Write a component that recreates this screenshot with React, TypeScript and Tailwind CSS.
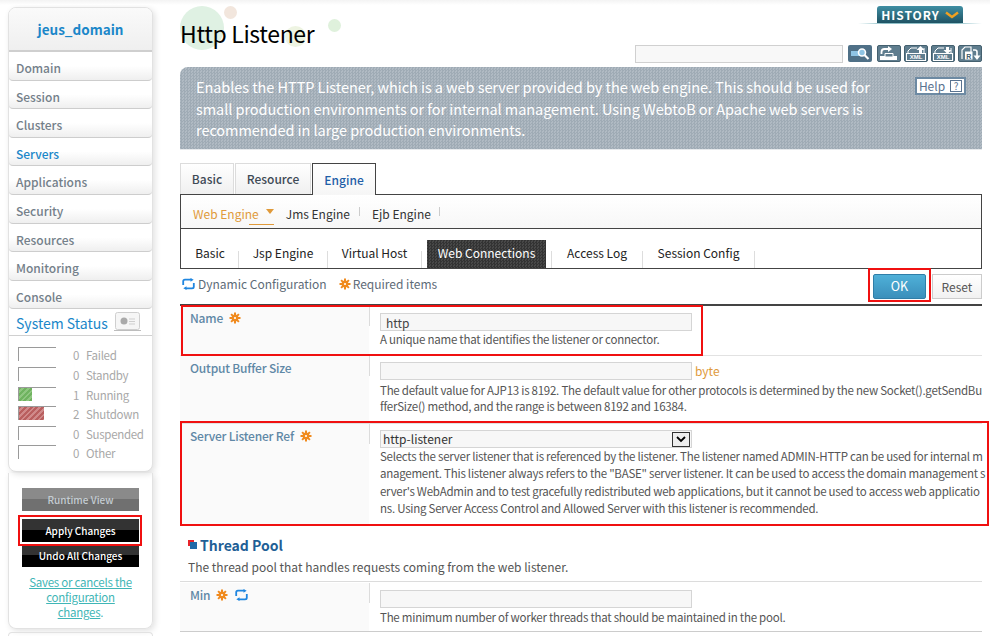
import React from 'react';

const FONT = "font-['Noto_Sans_CJK_KR','Noto_Sans',sans-serif]";

const menu = ['Domain', 'Session', 'Clusters', 'Servers', 'Applications', 'Security', 'Resources', 'Monitoring', 'Console'];

const statuses = [
  { count: 0, label: 'Failed', fill: '' },
  { count: 0, label: 'Standby', fill: '' },
  { count: 1, label: 'Running', fill: 'w-[13px] bg-[repeating-linear-gradient(135deg,#6fb35f_0_2px,#8fc680_2px_4px)]' },
  { count: 2, label: 'Shutdown', fill: 'w-[25px] bg-[repeating-linear-gradient(135deg,#b95f5f_0_2px,#d08a8a_2px_4px)]' },
  { count: 0, label: 'Suspended', fill: '' },
  { count: 0, label: 'Other', fill: '' },
];

function Gear() {
  return (
    <svg width="12" height="12" viewBox="0 0 12 12" className="inline-block shrink-0">
      <g stroke="#f08a1d" strokeWidth="2">
        <path d="M6 0.5v11M0.5 6h11M2.1 2.1l7.8 7.8M9.9 2.1l-7.8 7.8" />
      </g>
      <circle cx="6" cy="6" r="3.4" fill="#f08a1d" />
      <circle cx="6" cy="6" r="1.1" fill="#fff" />
    </svg>
  );
}

function Sync() {
  return (
    <svg width="13" height="12" viewBox="0 0 13 12" className="inline-block shrink-0" fill="none">
      <path d="M1.2 7V3.2C1.2 2.2 2 1.6 3 1.6h6.5" stroke="#1f86e0" strokeWidth="1.8" />
      <path d="M11.8 5v3.8c0 1-.8 1.6-1.8 1.6H3.500" stroke="#1f86e0" strokeWidth="1.8" />
      <path d="M8.500 0l3.200 1.800L8.500 3.800z M4.500 8.200L1.300 10.200l3.200 1.800z" fill="#1f86e0" />
    </svg>
  );
}

function ToolIcon({ children, plain }: { children: React.ReactNode; plain?: boolean }) {
  return (
    <div className={`w-[24px] h-[17px] rounded-[2px] flex items-center justify-center ${plain ? 'bg-[#4f7087]' : 'border border-[#44606f] bg-[#5f7d8e]'}`}>
      <svg width="22" height="15" viewBox="0 0 22 15" fill="none">
        {children}
      </svg>
    </div>
  );
}

function XmlIcon({ down }: { down?: boolean }) {
  return (
    <ToolIcon>
      <path d="M3 7V5l3-3h6M19 7V2" stroke="#fff" strokeWidth="1" />
      <path d={down ? 'M14 1h3v3h2.500l-4 4-4-4H14z' : 'M15.500 0l4 4H17v3h-3V4h-2.500z'} fill="#fff" />
      <rect x="1.500" y="7.500" width="19" height="7" fill="#5f7d8e" stroke="#fff" />
      <text x="11" y="13.200" textAnchor="middle" fontSize="6" fontWeight="700" fill="#fff" fontFamily="Liberation Sans, sans-serif">XML</text>
    </ToolIcon>
  );
}

function SideButton({ label, muted }: { label: string; muted?: boolean }) {
  return (
    <div
      className={`w-[117px] h-[23px] flex items-center justify-center text-[10px] font-medium ${
        muted
          ? 'bg-[linear-gradient(#8a8a8a_0_50%,#707070_50%_100%)] text-[#c4ccd2]'
          : 'bg-[linear-gradient(#333_0_48%,#000_48%_100%)] text-white'
      }`}
    >
      {label}
    </div>
  );
}

function Sidebar() {
  return (
    <div className="w-[180px] shrink-0 pl-[8px] pt-[7px]">
      <div className="w-[145px] rounded-[8px] border border-[#e2e2e2] bg-white shadow-[2px_2px_6px_rgba(0,0,0,0.12)] overflow-hidden">
        <div className="h-[44px] flex items-center justify-center bg-[linear-gradient(#fafafa,#efefef)] border-b-2 border-[#cfcfcf] text-[13.5px] font-bold text-[#1b87c9]">
          jeus_domain
        </div>
        {menu.map((item) => (
          <div
            key={item}
            className={`h-[28.6px] pl-[7px] pt-[7px] text-[12px] leading-[18px] font-medium rounded-b-[4px] border-b border-[#cdcdcd] bg-[linear-gradient(#fff_50%,#efefef)] ${
              item === 'Servers' ? 'text-[#1b87c9]' : 'text-[#74808a]'
            }`}
          >
            {item}
          </div>
        ))}
        <div className="h-[27px] flex items-center pl-[7px] gap-[6px] border-b border-[#d0d0d0]">
          <span className="pt-[3px] text-[14px] text-[#1b87c9]">System Status</span>
          <svg width="27" height="20" viewBox="0 0 27 20" fill="none">
            <rect x="1.500" y="0.500" width="24" height="17" rx="2" fill="#f6f6f6" stroke="#cfcfcf" />
            <circle cx="10" cy="9" r="3.500" fill="#aaa" />
            <path d="M15 7h6M15 9.500h6M15 12h6" stroke="#cfcfcf" />
            <path d="M0 18.500h27" stroke="#bdbdbd" />
          </svg>
        </div>
        <div className="pl-[9px] pt-[11px] pb-[6px]">
          {statuses.map((s) => (
            <div key={s.label} className="h-[19.6px] flex items-start">
              <div className="w-[38px] h-[14px] border-l border-t border-[#9a9a9a] shrink-0">
                {s.fill && <div className={`h-full ${s.fill}`} />}
              </div>
              <span className="w-[13px] ml-[17px] text-[11.5px] text-[#a8a8a8]">{s.count}</span>
              <span className="text-[11.5px] tracking-[-0.3px] text-[#a8a8a8]">{s.label}</span>
            </div>
          ))}
        </div>
      </div>
      <div className="w-[145px] h-[156px] mt-[1px] rounded-b-[8px] border-x border-b border-[#e2e2e2] shadow-[2px_2px_6px_rgba(0,0,0,0.12)] flex flex-col items-center pt-[15px]">
        <SideButton label="Runtime View" muted />
        <div className="mt-[8px]">
          <SideButton label="Apply Changes" />
        </div>
        <div className="mt-[2px]">
          <SideButton label="Undo All Changes" />
        </div>
        <p className="mt-[8px] text-[11.5px] leading-[15px] tracking-[-0.25px] text-center text-[#3fb6b6] w-[125px]">
          <span className="underline">Saves or cancels the</span>
          <br />
          <span className="underline">configuration</span>
          <br />
          <span className="underline">changes</span>.
        </p>
      </div>
      <div className="w-[145px] h-[10px] mt-[3px] rounded-t-[4px] border-x border-t border-[#e2e2e2]" />
    </div>
  );
}

function Row({
  label,
  icons,
  height,
  children,
  first,
  lines = 'leading-[16px]',
}: {
  label: string;
  icons?: React.ReactNode;
  height: string;
  children: React.ReactNode;
  first?: boolean;
  lines?: string;
}) {
  return (
    <div className={`flex ${height} ${first ? '' : 'border-t border-[#e2e2e2]'}`}>
      <div className="w-[189px] shrink-0 bg-[#fafafa] pl-[10px] pt-[3px] flex items-start gap-[6px] text-[12px] tracking-[-0.2px] font-medium text-[#5f88a6]">
        <span>{label}</span>
        <span className="flex items-center gap-[7px] mt-[3px]">{icons}</span>
      </div>
      <div className="w-px h-[20px] bg-[#dcdcdc] shrink-0" />
      <div className={`flex-1 min-w-0 pl-[10px] pt-[7px] text-[11.5px] tracking-[-0.25px] text-[#555] whitespace-nowrap ${lines}`}>
        {children}
      </div>
    </div>
  );
}

function TextBox({ value }: { value?: string }) {
  return (
    <div className="w-[312px] h-[18px] border border-[#d5d5d5] bg-[#f7f7f7] pl-[5px] text-[12px] leading-[17px] tracking-normal text-[#444]">
      {value}
    </div>
  );
}

export default function App() {
  return (
    <div className={`relative w-[990px] h-[636px] overflow-hidden bg-white flex ${FONT}`}>
      <div className="absolute inset-x-0 top-0 h-[5px] bg-[linear-gradient(#f3f3f3,#fff)]" />
      <Sidebar />

      <div className="relative w-[802px] shrink-0">
        {/* Title */}
        <div className="h-[67px] relative">
          <div className="absolute left-[0px] top-[6px] w-[44px] h-[44px] rounded-full bg-[#dff1e3]" />
          <div className="absolute left-[44px] top-[6px] w-[13px] h-[13px] rounded-full bg-[#f2e6dd]" />
          <div className="absolute left-[105px] top-[26px] w-[21px] h-[21px] rounded-full bg-[#eef4e2]" />
          <div className="absolute left-[148px] top-[19px] w-[13px] h-[13px] rounded-full bg-[#dff1dc]" />
          <h1 className="relative pt-[15px] text-[23px] leading-[36px] tracking-[-0.35px] font-normal text-black">Http Listener</h1>

          <div className="absolute right-[19px] top-[6px] w-[86px] h-[18px] rounded-t-[3px] bg-[linear-gradient(#3f8ea3,#1d4f60)] flex items-center justify-center gap-[5px] text-[12px] font-bold tracking-[1px] text-white">
            HISTORY
            <svg width="14" height="8" viewBox="0 0 14 8" fill="none">
              <path d="M1 1.500l6 4.500 6-4.500" stroke="#f0a020" strokeWidth="2.400" />
            </svg>
          </div>
          <div className="absolute right-0 top-[23px] w-[124px] h-px bg-[linear-gradient(90deg,#fff,#8fc0c8_20%,#8fc0c8_80%,#fff)]" />

          <div className="absolute left-[455px] top-[45px] w-[208px] h-[18px] border border-[#d0d0d0] bg-[#f8f8f8]" />
          <div className="absolute right-0 top-[45px] flex gap-[3px]">
            <div className="mr-[2px]">
              <ToolIcon plain>
                <rect x="2" y="5" width="9" height="5" fill="#8fc4e4" />
                <circle cx="13" cy="6.500" r="3.500" fill="#8fc4e4" stroke="#fff" strokeWidth="1.600" />
                <path d="M15.500 9l4 4" stroke="#fff" strokeWidth="2.200" />
              </ToolIcon>
            </div>
            <ToolIcon>
              <path d="M3.500 8V6a3 3 0 0 1 3-3h4" stroke="#fff" strokeWidth="1.800" />
              <path d="M10 0l4 3-4 3z" fill="#fff" />
              <path d="M2 10h17v4H2z" fill="#fff" />
              <path d="M7 7.500h8v3.500H7z" fill="#5f7d8e" stroke="#fff" />
            </ToolIcon>
            <XmlIcon />
            <XmlIcon down />
            <ToolIcon>
              <path d="M3 13V4l3-3h6v5" stroke="#fff" strokeWidth="1.200" />
              <rect x="6" y="5.500" width="7.500" height="8" fill="#fff" />
              <text x="9.700" y="12.500" textAnchor="middle" fontSize="7" fontWeight="700" fill="#44606f" fontFamily="Liberation Sans, sans-serif">R</text>
              <path d="M14 4h2a2 2 0 0 1 2 2v4" stroke="#fff" strokeWidth="1.600" />
              <path d="M14.500 9.500h7L18 14z" fill="#fff" />
            </ToolIcon>
          </div>
        </div>

        {/* Description banner */}
        <div className="relative h-[83px] rounded-tl-[8px] border-b border-[#e6e9ec] bg-[repeating-conic-gradient(#9fabb5_0_25%,#b0bac3_0_50%)] bg-[length:3px_3px] pl-[16px] pt-[9px] text-[14.5px] tracking-[-0.06px] leading-[21.5px] text-white whitespace-nowrap">
          <div>Enables the HTTP Listener, which is a web server provided by the web engine. This should be used for</div>
          <div>small production environments or for internal management. Using WebtoB or Apache web servers is</div>
          <div>recommended in large production environments.</div>
          <div className="absolute right-[16px] top-[10px] w-[51px] h-[18px] border-2 border-[#6d8aa3] bg-white flex items-center justify-center gap-[5px] text-[12px] tracking-normal text-[#5a7390]">
            Help
            <span className="w-[12px] h-[12px] border border-[#5a7390] text-[10px] leading-[10px] text-center">?</span>
          </div>
        </div>

        {/* Top tabs */}
        <div className="flex items-end gap-[1px] h-[44px] text-[12px] font-medium">
          <div className="w-[54px] h-[31px] flex items-center justify-center border-x border-t border-[#dcdcdc] bg-[linear-gradient(#fff,#f0f0f0)] text-[#3f4a55]">Basic</div>
          <div className="w-[76px] h-[31px] flex items-center justify-center border-x border-t border-[#dcdcdc] bg-[linear-gradient(#fff,#f0f0f0)] text-[#3f4a55]">Resource</div>
          <div className="w-[64px] h-[32px] -mb-px z-10 flex items-center justify-center border-x border-t border-[#444] bg-[linear-gradient(#fff,#f6f6f6)] text-[#1f5fa8]">Engine</div>
        </div>

        {/* Engine menu */}
        <div className="h-[35px] border border-[#444] bg-[linear-gradient(#fff,#f7f7f7)] flex items-center pl-[12px] text-[12px] text-[#333]">
          <div className="relative text-[#e09a3a] flex items-center gap-[7px] pt-[4px]">
            Web Engine
            <span className="w-0 h-0 border-x-[4px] border-x-transparent border-t-[5px] border-t-[#e09a3a] -mt-[4px]" />
            <span className="absolute right-0 -bottom-[2px] w-[25px] h-px bg-[#e09a3a]" />
          </div>
          <span className="ml-[12px] pt-[4px]">Jms Engine</span>
          <span className="ml-[9px] w-px h-[9px] bg-[#ccc]" />
          <span className="ml-[12px] pt-[4px]">Ejb Engine</span>
          <span className="ml-[8px] w-px h-[9px] bg-[#ccc]" />
        </div>

        {/* Sub tabs */}
        <div className="h-[40px] border-x border-b border-[#444] flex items-end pl-[5px] text-[12px] text-[#222]">
          <div className="w-[52px] h-[28px] pr-[4px] pb-[2px] flex items-center justify-center">Basic</div>
          <div className="w-px h-[17px] bg-[#ddd]" />
          <div className="w-[88px] h-[28px] pb-[2px] flex items-center justify-center">Jsp Engine</div>
          <div className="w-px h-[17px] bg-[#ddd]" />
          <div className="w-[93px] h-[28px] pb-[2px] flex items-center justify-center">Virtual Host</div>
          <div className="w-px h-[17px] bg-[#ddd]" />
          <div className="ml-[5px] w-[119px] h-[28px] pb-[2px] flex items-center justify-center bg-[repeating-conic-gradient(#333_0_25%,#484848_0_50%)] bg-[length:3px_3px] text-white">Web Connections</div>
          <div className="ml-[5px] w-px h-[17px] bg-[#ddd]" />
          <div className="w-[90px] h-[28px] pb-[2px] flex items-center justify-center">Access Log</div>
          <div className="w-px h-[17px] bg-[#ddd]" />
          <div className="w-[111px] h-[28px] pb-[2px] flex items-center justify-center">Session Config</div>
          <div className="w-px h-[17px] bg-[#ddd]" />
        </div>

        {/* Toolbar */}
        <div className="h-[37px] flex items-start justify-between border-b-2 border-[#444]">
          <div className="flex items-center pt-[6px] pl-[2px] text-[12px] text-[#5d6b77]">
            <Sync />
            <span className="ml-[3px]">Dynamic Configuration</span>
            <span className="ml-[12px] mr-[2px] flex"><Gear /></span>
            <span>Required items</span>
          </div>
          <div className="flex gap-[6px] pt-[5px]">
            <div className="w-[53px] h-[25px] flex items-center justify-center rounded-[2px] border border-[#2f7ea8] bg-[linear-gradient(#4fb0d8,#3a8fbb)] text-white text-[12.5px]">OK</div>
            <div className="w-[50px] h-[25px] flex items-center justify-center border border-[#ccc] bg-[linear-gradient(#fff,#f1f1f1)] text-[#555] text-[12px]">Reset</div>
          </div>
        </div>

        {/* Form */}
        <Row first label="Name" icons={<Gear />} height="h-[49px]">
          <TextBox value="http" />
          <div>A unique name that identifies the listener or connector.</div>
        </Row>
        <Row label="Output Buffer Size" height="h-[68px]">
          <div className="flex items-center -mt-[1px]">
            <TextBox />
            <span className="ml-[3px] text-[12px] tracking-normal text-[#e09a3a]">byte</span>
          </div>
          <div className="mt-[2px]">The default value for AJP13 is 8192. The default value for other protocols is determined by the new Socket().getSendBu</div>
          <div>fferSize() method, and the range is between 8192 and 16384.</div>
        </Row>
        <Row label="Server Listener Ref" icons={<Gear />} height="h-[101px]" lines="leading-[17.3px]">
          <div className="w-[312px] h-[18px] -mt-[1px] border border-[#d5d5d5] bg-[#f7f7f7] pl-[2px] pr-px flex items-center justify-between text-[12px] tracking-normal text-[#333]">
            http-listener
            <div className="w-[18px] h-[15px] border border-[#333] bg-[#eee] flex items-center justify-center">
              <svg width="10" height="7" viewBox="0 0 10 7" fill="none">
                <path d="M1 1l4 4 4-4" stroke="#000" strokeWidth="1.800" />
              </svg>
            </div>
          </div>
          <div>Selects the server listener that is referenced by the listener. The listener named ADMIN-HTTP can be used for internal m</div>
          <div>anagement. This listener always refers to the "BASE" server listener. It can be used to access the domain management s</div>
          <div>erver's WebAdmin and to test gracefully redistributed web applications, but it cannot be used to access web applicatio</div>
          <div>ns. Using Server Access Control and Allowed Server with this listener is recommended.</div>
        </Row>

        {/* Thread Pool */}
        <div className="flex items-center gap-[3px] pl-[8px] pt-[11px] text-[14px] font-bold text-[#1f5f96]">
          <span className="relative w-[9px] h-[9px] mt-[-3px]">
            <span className="absolute left-0 top-0 w-[6px] h-[6px] bg-[#e8232a]" />
            <span className="absolute left-[2px] top-[2px] w-[7px] h-[7px] bg-[#1f6aa8]" />
          </span>
          Thread Pool
        </div>
        <div className="pl-[8px] mt-[2px] h-[24px] text-[12px] text-[#555] border-b border-[#dcdcdc]">
          The thread pool that handles requests coming from the web listener.
        </div>
        <Row first label="Min" icons={<><Gear /><Sync /></>} height="h-[50px] border-b border-[#ccc] pt-[1px]">
          <TextBox />
          <div className="mt-[1px]">The minimum number of worker threads that should be maintained in the pool.</div>
        </Row>
      </div>

      {/* Red highlight boxes */}
      <div className="absolute left-[18px] top-[515px] w-[124px] h-[31px] border-2 border-[#f01010]" />
      <div className="absolute left-[868px] top-[268px] w-[63px] h-[34px] border-2 border-[#f01010]" />
      <div className="absolute left-[181px] top-[305px] w-[522px] h-[51px] border-2 border-[#f01010]" />
      <div className="absolute left-[180px] top-[421px] w-[809px] h-[105px] border-2 border-[#f01010]" />
    </div>
  );
}
